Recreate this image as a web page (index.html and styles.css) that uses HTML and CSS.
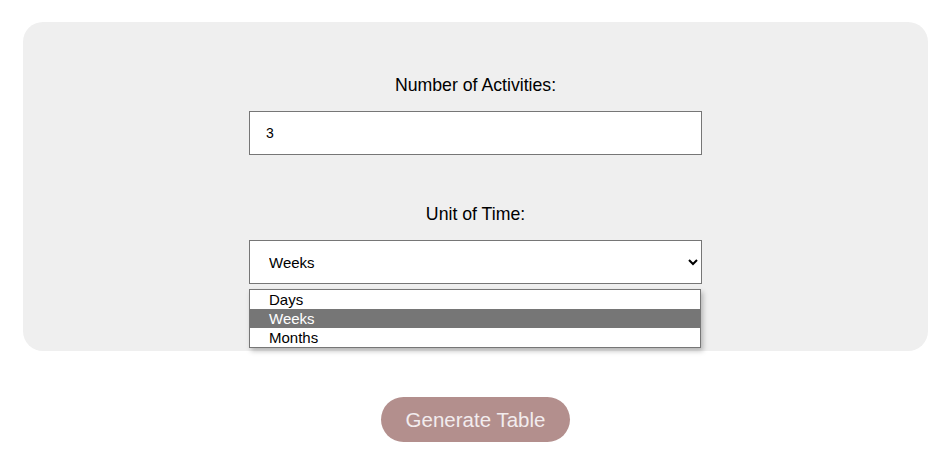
FILE: index.html
```html
<!DOCTYPE html>
<html lang="en">
<head>
<meta charset="utf-8">
<title>Activity Table</title>
<link rel="stylesheet" href="styles.css">
</head>
<body>
<div class="page">
  <form class="panel">
    <div class="field">
      <label for="count">Number of Activities:</label>
      <input id="count" type="number" value="3">
    </div>
    <div class="field">
      <label for="unit">Unit of Time:</label>
      <div class="select-wrap">
        <select id="unit">
          <option>Days</option>
          <option selected>Weeks</option>
          <option>Months</option>
        </select>
        <ul class="dropdown">
          <li>Days</li>
          <li class="active">Weeks</li>
          <li>Months</li>
        </ul>
      </div>
    </div>
  </form>
  <div class="actions">
    <button type="button" class="generate">Generate Table</button>
  </div>
</div>
</body>
</html>
```

FILE: styles.css
```css
* { box-sizing: border-box; }
body {
  margin: 0;
  font-family: "Liberation Sans", Arial, sans-serif;
  color: #000;
  background: #fff;
}
.page {
  padding: 22px 24px 0 23px;
}
.panel {
  background: #efefef;
  border-radius: 20px;
  padding: 53px 0 67px;
  display: flex;
  flex-direction: column;
  align-items: center;
  margin: 0;
}
.field {
  width: 453px;
  display: flex;
  flex-direction: column;
  align-items: center;
}
.field + .field {
  margin-top: 49px;
}
.field label {
  font-size: 17.7px;
  line-height: 21px;
  margin-bottom: 15px;
}
.field input {
  width: 100%;
  height: 44px;
  border: 1px solid #767676;
  border-radius: 0;
  padding: 0 16px;
  font-family: "Liberation Sans", Arial, sans-serif;
  font-size: 14px;
  color: #000;
  background: #fff;
  outline: none;
  -moz-appearance: textfield;
}
.field input::-webkit-outer-spin-button,
.field input::-webkit-inner-spin-button {
  -webkit-appearance: none;
  margin: 0;
}
.select-wrap {
  position: relative;
  width: 100%;
}
.select-wrap select {
  width: 100%;
  height: 44px;
  border: 1px solid #767676;
  border-radius: 0;
  padding: 0 8px 0 15px;
  font-family: "Liberation Sans", Arial, sans-serif;
  font-size: 15px;
  color: #000;
  background: #fff;
  outline: none;
}
.dropdown {
  position: absolute;
  top: 49px;
  left: 0;
  width: 452px;
  margin: 0;
  padding: 0;
  list-style: none;
  background: #fff;
  border: 1px solid #767676;
  box-shadow: 2px 3px 5px rgba(0, 0, 0, 0.25);
  font-size: 15px;
  z-index: 2;
}
.dropdown li {
  height: 19px;
  line-height: 19px;
  padding-left: 19px;
  color: #000;
}
.dropdown li.active {
  background: #767676;
  color: #fff;
}
.actions {
  display: flex;
  justify-content: center;
  margin-top: 46px;
}
.generate {
  width: 189px;
  height: 45px;
  border: none;
  border-radius: 23px;
  background: #b38f8d;
  color: #f2ecee;
  font-family: "Liberation Sans", Arial, sans-serif;
  font-size: 20.5px;
  cursor: pointer;
}
```
